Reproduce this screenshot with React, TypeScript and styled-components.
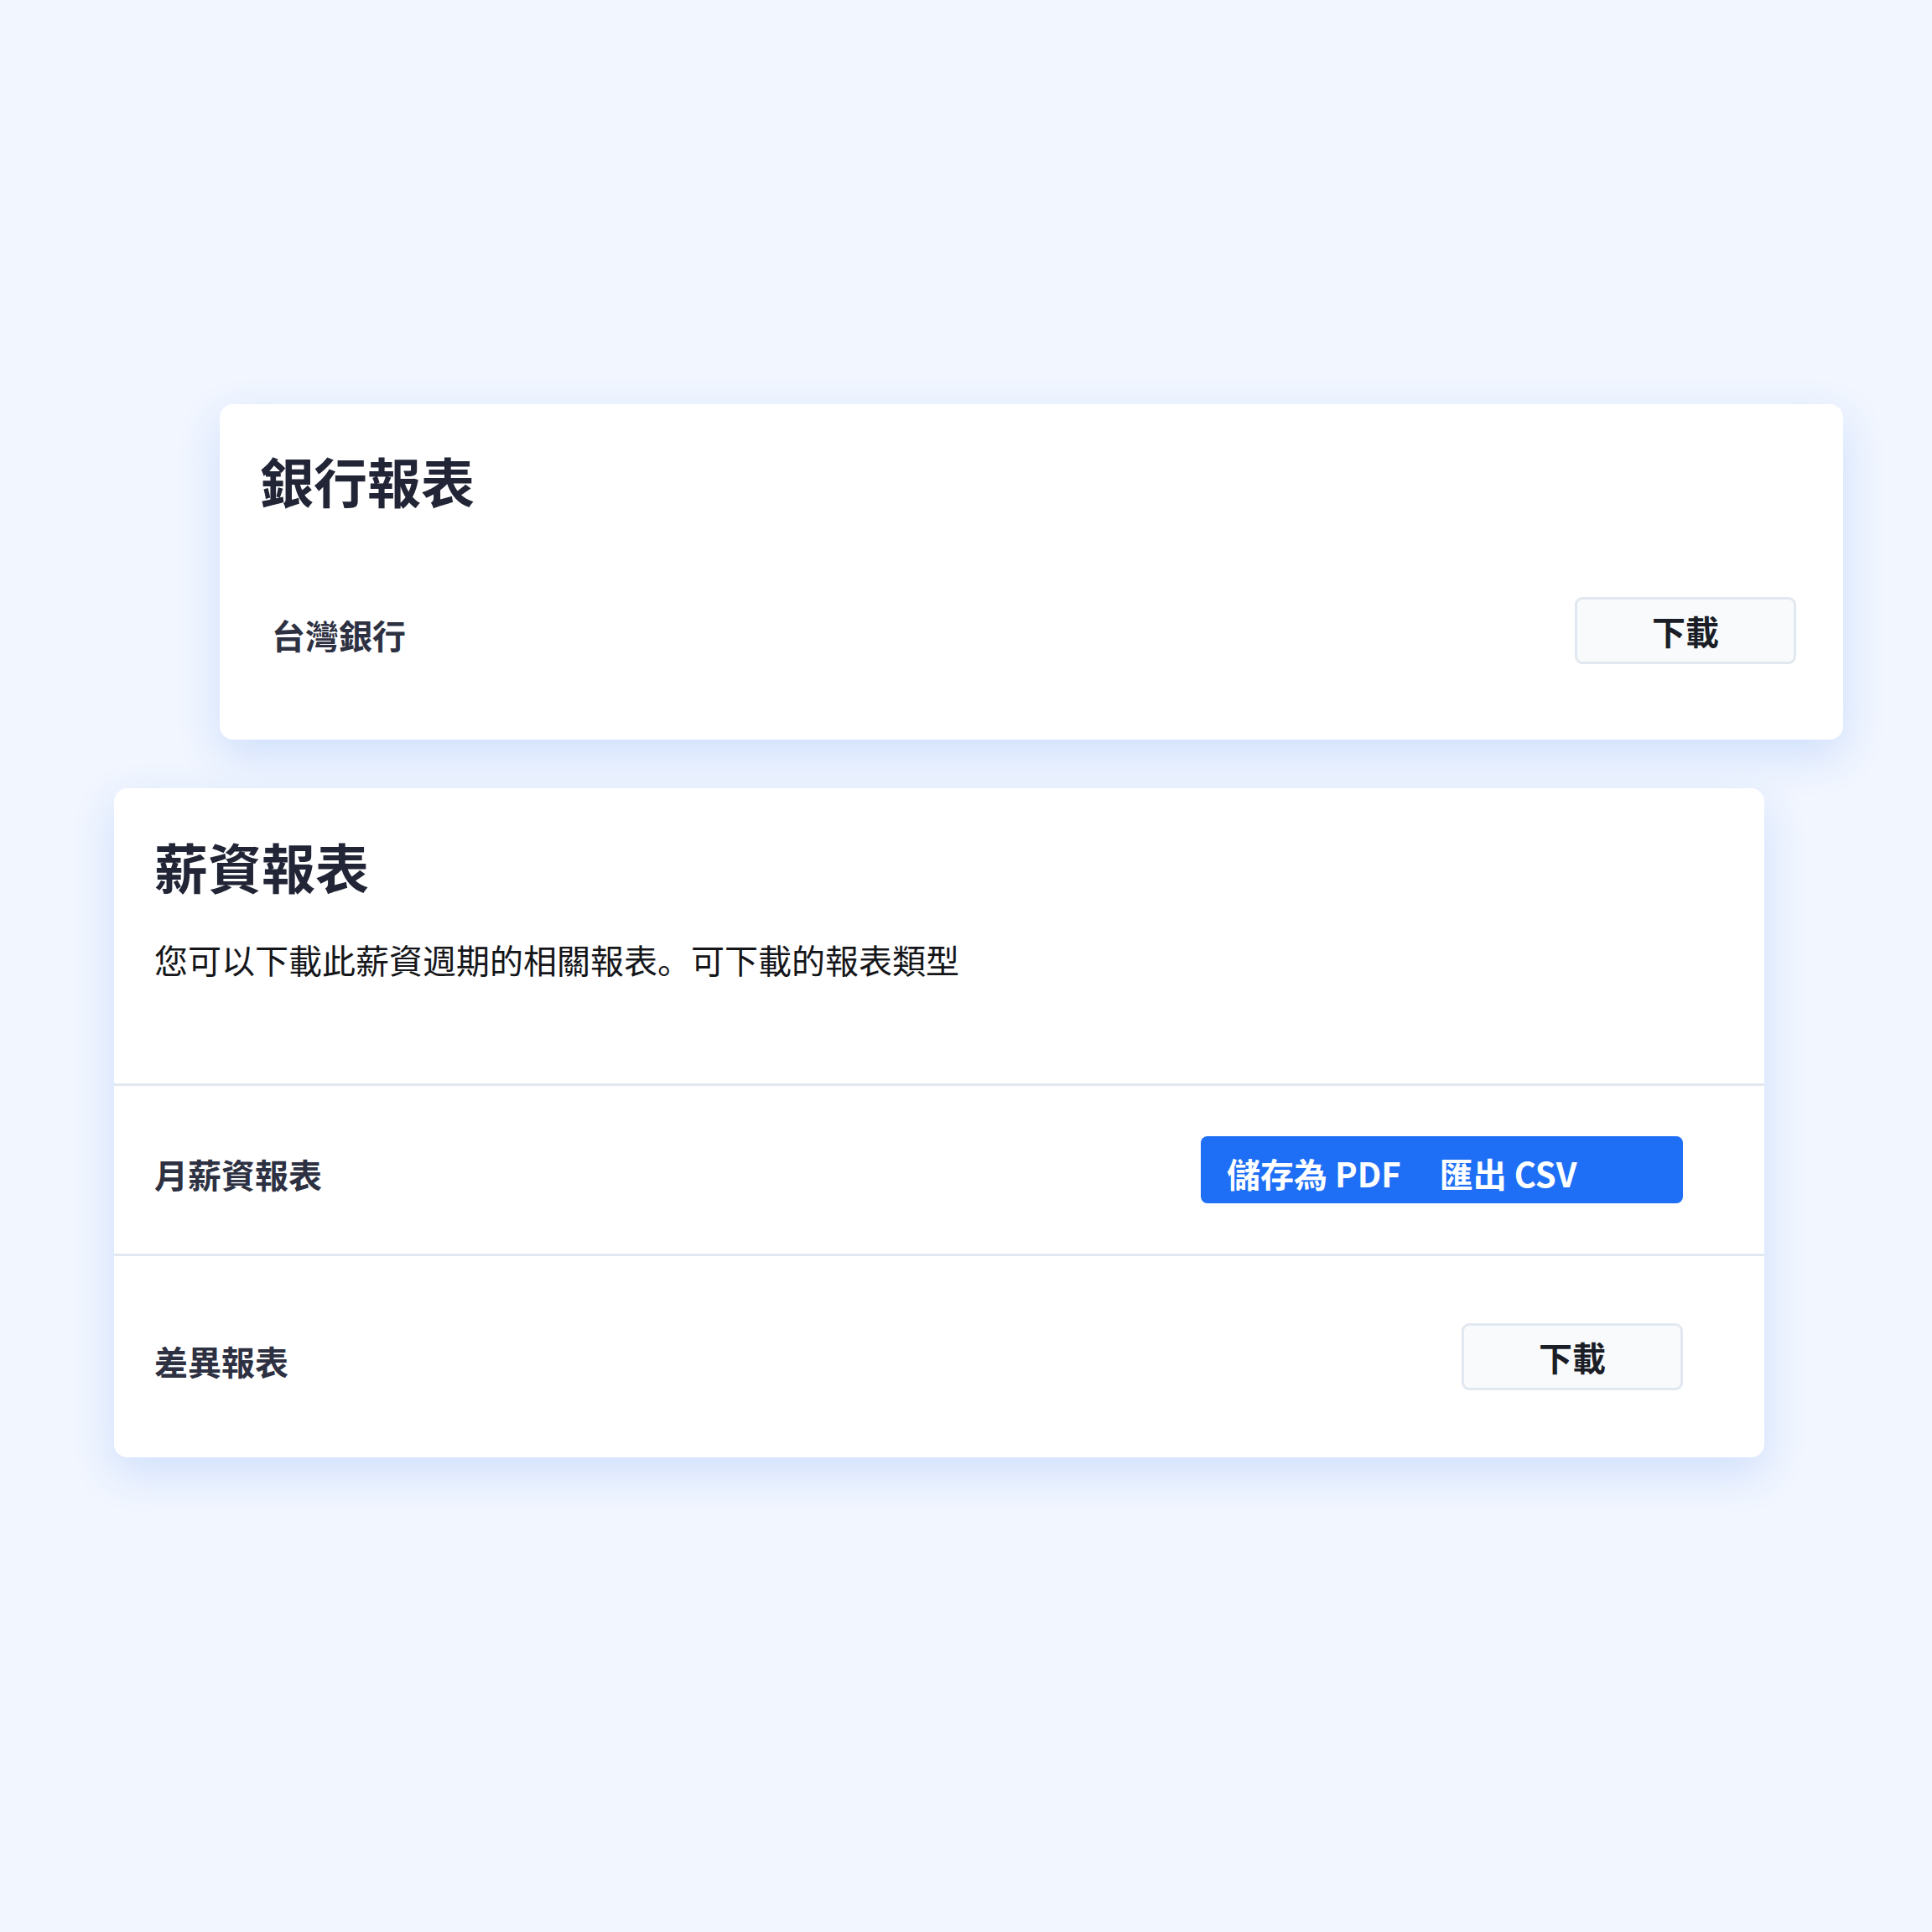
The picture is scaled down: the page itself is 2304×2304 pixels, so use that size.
import React from "react";
import styled, { createGlobalStyle } from "styled-components";

const GlobalStyle = createGlobalStyle`
  html, body {
    margin: 0;
    padding: 0;
    background: #f1f6ff;
  }
  body {
    font-family: "Noto Sans CJK SC", "Noto Sans CJK TC", "Noto Sans", sans-serif;
  }
  * { box-sizing: border-box; }
`;

const Page = styled.div`
  width: 2304px;
  min-height: 2304px;
  padding-top: 482px;
  display: flex;
  flex-direction: column;
  align-items: flex-start;
  gap: 58px;
  background: #f1f6ff;
`;

const Card = styled.section<{ $left: number; $width: number }>`
  margin-left: ${(p) => p.$left}px;
  width: ${(p) => p.$width}px;
  background: #ffffff;
  border-radius: 16px;
  box-shadow: 0 18px 50px rgba(40, 110, 240, 0.17);
  display: flex;
  flex-direction: column;
  overflow: hidden;
`;

const Header = styled.div<{ $pt: number; $pb: number }>`
  padding: ${(p) => p.$pt}px 48px ${(p) => p.$pb}px 48px;
  display: flex;
  flex-direction: column;
`;

const Title = styled.h2`
  margin: 0;
  font-size: 64px;
  line-height: 80px;
  font-weight: 700;
  color: #222536;
`;

const Description = styled.p`
  margin: 42px 0 0 0;
  font-size: 40px;
  line-height: 60px;
  font-weight: 400;
  color: #15161a;
`;

const Row = styled.div<{ $pt: number; $pb: number; $pl: number; $pr: number; $divider?: boolean }>`
  display: flex;
  align-items: center;
  justify-content: space-between;
  padding: ${(p) => p.$pt}px ${(p) => p.$pr}px ${(p) => p.$pb}px ${(p) => p.$pl}px;
  border-top: ${(p) => (p.$divider ? "3px solid #e2e8f0" : "none")};
`;

const BankRow = styled(Row)`
  margin-top: 100px;
`;

const Label = styled.span`
  font-size: 40px;
  line-height: 56px;
  font-weight: 700;
  color: #2d3142;
  padding-top: 10px;
`;

const DownloadButton = styled.button`
  width: 264px;
  height: 80px;
  border: 3px solid #e2e8f0;
  border-radius: 9px;
  background: #f8fafc;
  font-family: inherit;
  font-size: 40px;
  font-weight: 700;
  color: #1b1e26;
  display: flex;
  align-items: center;
  justify-content: center;
  padding: 0;
  cursor: pointer;
`;

const ExportGroup = styled.div`
  width: 575px;
  height: 80px;
  background: #1e6ff6;
  border-radius: 8px;
  display: flex;
  align-items: center;
  gap: 46px;
  padding-left: 31px;
`;

const ExportItem = styled.span`
  font-size: 40px;
  line-height: 56px;
  font-weight: 700;
  color: #ffffff;
  white-space: nowrap;
  padding-top: 8px;
  cursor: pointer;
`;

export default function App() {
  return (
    <>
      <GlobalStyle />
      <Page>
        <Card $left={262} $width={1936}>
          <Header $pt={50} $pb={0}>
            <Title>銀行報表</Title>
          </Header>
          <BankRow $pt={0} $pb={90} $pl={62} $pr={56}>
            <Label>台灣銀行</Label>
            <DownloadButton>下載</DownloadButton>
          </BankRow>
        </Card>

        <Card $left={136} $width={1968}>
          <Header $pt={52} $pb={118}>
            <Title>薪資報表</Title>
            <Description>您可以下載此薪資週期的相關報表。可下載的報表類型</Description>
          </Header>
          <Row $divider $pt={60} $pb={60} $pl={48} $pr={97}>
            <Label>月薪資報表</Label>
            <ExportGroup>
              <ExportItem>儲存為 PDF</ExportItem>
              <ExportItem>匯出 CSV</ExportItem>
            </ExportGroup>
          </Row>
          <Row $divider $pt={80} $pb={80} $pl={48} $pr={97}>
            <Label>差異報表</Label>
            <DownloadButton>下載</DownloadButton>
          </Row>
        </Card>
      </Page>
    </>
  );
}
